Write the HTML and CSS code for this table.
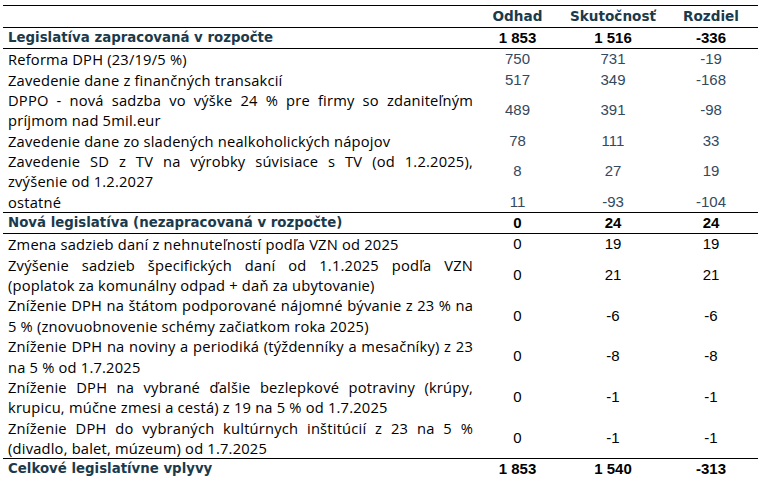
FILE: index.html
```html
<!DOCTYPE html>
<html lang="sk">
<head>
<meta charset="utf-8">
<title>Legislatívne vplyvy</title>
<link rel="stylesheet" href="styles.css">
</head>
<body>
<div class="wrap">
<table class="t">
  <colgroup>
    <col class="c-desc">
    <col class="c-odh">
    <col class="c-sku">
    <col class="c-roz">
  </colgroup>
  <thead>
    <tr class="head">
      <th class="desc"></th>
      <th>Odhad</th>
      <th>Skutočnosť</th>
      <th>Rozdiel</th>
    </tr>
  </thead>
  <tbody>
    <tr class="sec">
      <td class="desc">Legislatíva zapracovaná v rozpočte</td>
      <td>1 853</td><td>1 516</td><td>-336</td>
    </tr>
    <tr class="blue">
      <td class="desc">Reforma DPH (23/19/5 %)</td>
      <td>750</td><td>731</td><td>-19</td>
    </tr>
    <tr class="blue">
      <td class="desc">Zavedenie dane z finančných transakcií</td>
      <td>517</td><td>349</td><td>-168</td>
    </tr>
    <tr class="blue">
      <td class="desc"><span class="ln">DPPO - nová sadzba vo výške 24 % pre firmy so zdaniteľným</span> <span class="ln">príjmom nad 5mil.eur</span></td>
      <td>489</td><td>391</td><td>-98</td>
    </tr>
    <tr class="blue">
      <td class="desc">Zavedenie dane zo sladených nealkoholických nápojov</td>
      <td>78</td><td>111</td><td>33</td>
    </tr>
    <tr class="blue">
      <td class="desc"><span class="ln">Zavedenie SD z TV na výrobky súvisiace s TV (od 1.2.2025),</span> <span class="ln">zvýšenie od 1.2.2027</span></td>
      <td>8</td><td>27</td><td>19</td>
    </tr>
    <tr class="blue">
      <td class="desc">ostatné</td>
      <td>11</td><td>-93</td><td>-104</td>
    </tr>
    <tr class="sec">
      <td class="desc">Nová legislatíva (nezapracovaná v rozpočte)</td>
      <td>0</td><td>24</td><td>24</td>
    </tr>
    <tr>
      <td class="desc">Zmena sadzieb daní z nehnuteľností podľa VZN od 2025</td>
      <td>0</td><td>19</td><td>19</td>
    </tr>
    <tr>
      <td class="desc"><span class="ln">Zvýšenie sadzieb špecifických daní od 1.1.2025 podľa VZN</span> <span class="ln">(poplatok za komunálny odpad + daň za ubytovanie)</span></td>
      <td>0</td><td>21</td><td>21</td>
    </tr>
    <tr>
      <td class="desc"><span class="ln">Zníženie DPH na štátom podporované nájomné bývanie z 23 % na</span> <span class="ln">5 % (znovuobnovenie schémy začiatkom roka 2025)</span></td>
      <td>0</td><td>-6</td><td>-6</td>
    </tr>
    <tr>
      <td class="desc"><span class="ln">Zníženie DPH na noviny a periodiká (týždenníky a mesačníky) z 23</span> <span class="ln">na 5 % od 1.7.2025</span></td>
      <td>0</td><td>-8</td><td>-8</td>
    </tr>
    <tr>
      <td class="desc"><span class="ln">Zníženie DPH na vybrané ďalšie bezlepkové potraviny (krúpy,</span> <span class="ln">krupicu, múčne zmesi a cestá) z 19 na 5 % od 1.7.2025</span></td>
      <td>0</td><td>-1</td><td>-1</td>
    </tr>
    <tr>
      <td class="desc"><span class="ln">Zníženie DPH do vybraných kultúrnych inštitúcií z 23 na 5 %</span> <span class="ln">(divadlo, balet, múzeum) od 1.7.2025</span></td>
      <td>0</td><td>-1</td><td>-1</td>
    </tr>
    <tr class="sec total">
      <td class="desc">Celkové legislatívne vplyvy</td>
      <td>1 853</td><td>1 540</td><td>-313</td>
    </tr>
  </tbody>
</table>
</div>
</body>
</html>
```
FILE: styles.css
```css
html, body {
  margin: 0;
  padding: 0;
  background: #ffffff;
}

.wrap {
  padding: 5px 10px 0 3px;
}

.t {
  width: 755px;
  border-collapse: collapse;
  table-layout: fixed;
  border-top: 1.5px solid #000;
  font-size: 14px;
  line-height: 20.35px;
  color: #000;
}

.c-desc { width: 477px; }
.c-odh { width: 75px; }
.c-sku { width: 116px; }
.c-roz { width: 87px; }

.t th,
.t td {
  padding: 0;
  text-align: center;
  vertical-align: middle;
  font-family: "Liberation Sans", Arial, sans-serif;
  font-size: 15px;
}

.t th {
  font-family: "DejaVu Sans", sans-serif;
  font-size: 13.6px;
  font-weight: 700;
  color: #1b3a4b;
  height: 21px;
  border-bottom: 1.5px solid #000;
}

.t td:last-child,
.t th:last-child {
  padding-right: 7px;
}

.t .desc {
  font-family: "Open Sans", sans-serif;
  font-size: 14.7px;
  letter-spacing: 0.2px;
  text-align: left;
  padding: 0 7px 0 5px;
}

.ln {
  display: block;
}

.ln:first-child {
  text-align: justify;
  text-align-last: justify;
}

.blue td {
  color: #34495e;
}

.blue td.desc {
  color: #000;
}

.sec td {
  font-weight: 700;
  height: 19px;
  border-bottom: 1.5px solid #000;
}

.t .sec td.desc {
  font-family: "DejaVu Sans", sans-serif;
  font-size: 13.33px;
  font-weight: 700;
  letter-spacing: 0;
  color: #1b3a4b;
}

tr.sec:not(:first-child) td {
  border-top: 1.5px solid #000;
}
```
